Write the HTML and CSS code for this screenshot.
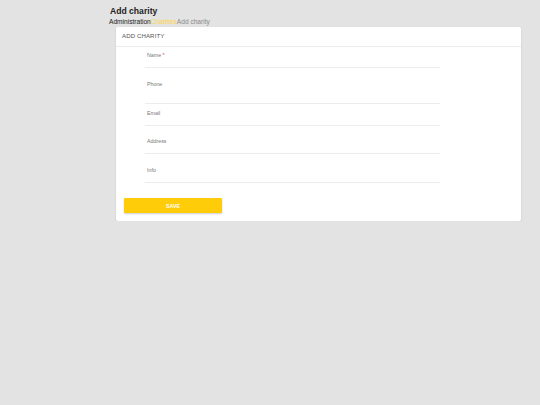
FILE: index.html
```html
<!DOCTYPE html>
<html>
<head>
<meta charset="utf-8">
<link rel="stylesheet" href="styles.css">
</head>
<body>
<div class="page">
  <h1 class="title">Add charity</h1>
  <div class="crumbs"><span class="crumb">Administration</span><span class="crumb crumb-link">Charities</span><span class="crumb crumb-current">Add charity</span></div>
  <div class="card">
    <div class="card-header">ADD CHARITY</div>
    <div class="card-body">
      <div class="fields">
        <div class="field field-name"><label class="label">Name <span class="req">*</span></label><div class="input"></div></div>
        <div class="field field-phone"><label class="label">Phone</label><div class="input"></div></div>
        <div class="field field-email"><label class="label">Email</label><div class="input"></div></div>
        <div class="field field-address"><label class="label">Address</label><div class="input"></div></div>
        <div class="field field-info"><label class="label">Info</label><div class="input"></div></div>
      </div>
      <button class="save">SAVE</button>
    </div>
  </div>
</div>
</body>
</html>
```
FILE: styles.css
```css
html, body {
  margin: 0;
  padding: 0;
  background: #e3e3e3;
  font-family: "Liberation Sans", Arial, sans-serif;
}
.page {
  padding: 5px 19px 0 109px;
}
.title {
  margin: 0 0 0 1px;
  font-size: 8.6px;
  line-height: 12px;
  font-weight: bold;
  color: #222;
}
.crumbs {
  font-size: 6.6px;
  line-height: 10px;
  margin-top: 0;
  white-space: nowrap;
}
.crumb { color: #222; }
.crumb-link { color: #ffd54a; }
.crumb-current { color: #8a8a8a; }
.card {
  margin: 0 0 0 7px;
  width: 405px;
  background: #fff;
  border-radius: 2px;
  box-shadow: 0 1px 2px rgba(0,0,0,0.12);
}
.card-header {
  height: 19px;
  line-height: 18px;
  padding-left: 6px;
  font-size: 6.1px;
  letter-spacing: 0.1px;
  color: #555;
  border-bottom: 1px solid #ececec;
}
.card-body {
  padding: 0 8px 8px 8px;
}
.fields {
  margin-left: 21px;
  width: 295px;
}
.field {
  border-bottom: 1px solid #ececec;
}
.label {
  display: block;
  padding-left: 2px;
  font-size: 5.3px;
  line-height: 6px;
  color: #777;
}
.req { color: #e53935; }
.input { height: 9px; }
.field-name { padding-top: 5px; }
.field-phone { padding-top: 13px; }
.field-phone .input { height: 16px; }
.field-email { padding-top: 6px; }
.field-address { padding-top: 12px; }
.field-info { padding-top: 13px; }
.save {
  display: block;
  margin-top: 15px;
  width: 98px;
  height: 15px;
  padding: 0;
  border: none;
  border-radius: 1px;
  background: #ffcc0a;
  color: #fff;
  font-family: "Liberation Sans", Arial, sans-serif;
  font-size: 5.3px;
  font-weight: bold;
  box-shadow: 0 1px 2px rgba(0,0,0,0.2);
}
```
